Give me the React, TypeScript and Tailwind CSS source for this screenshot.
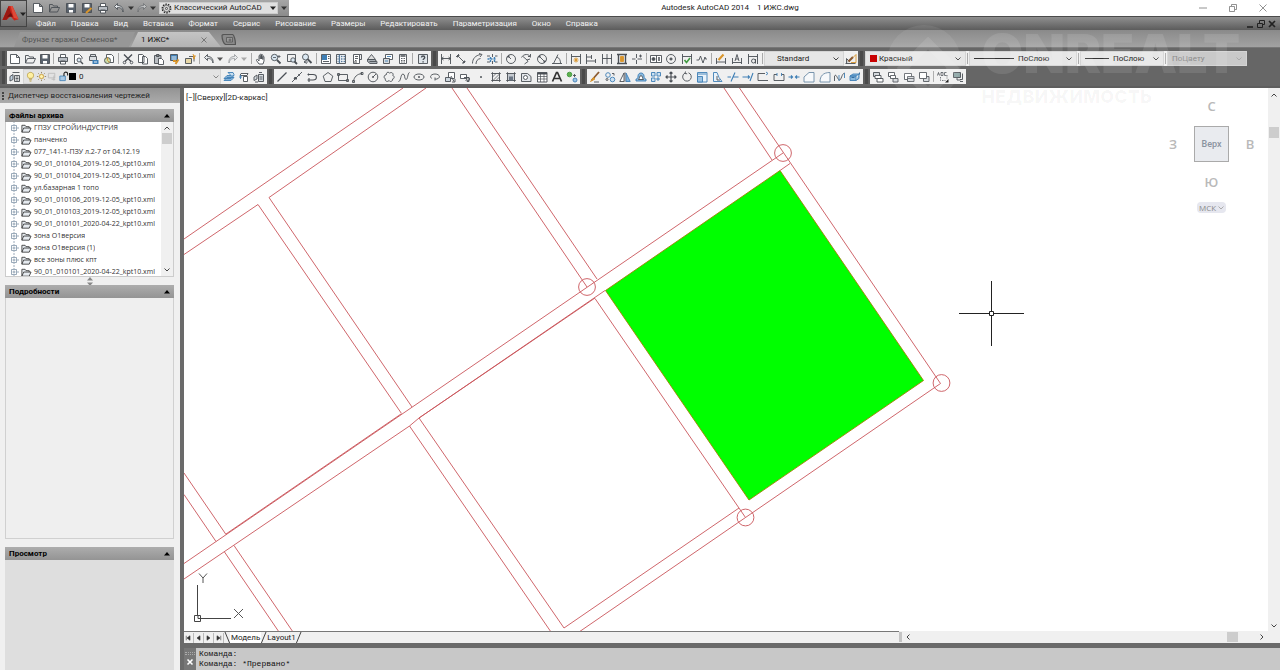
import { Fragment, useState, type ReactNode } from 'react';

const ink = '#4a4f55';
const blue = '#3f7fb5';
const amber = '#d9952b';
const green = '#3f9a3f';

// 12x12 glyphs, stroked with currentColor unless they say otherwise
const glyphs: Record<string, ReactNode> = {
  new: <path d="M1.5 1.5h6l3 3v6h-9zM7.5 1.5v3h3" fill="#fff" />,
  open: <path d="M1.5 10V2.500h3l1 1.500h4v1.500M1.500 10l2-4.500h8L9.500 10z" fill="none" />,
  save: <><path d="M1.5 1.500h9v9h-9z" fill="#59626d" /><path d="M3.500 2h5v3.500h-5zM4 8h4v2.500H4z" fill="#fff" stroke="none" /></>,
  saveAs: <><path d="M1.5 1.500h9v9h-9z" fill="#59626d" /><path d="M3.500 2h5v3.500h-5z" fill="#fff" stroke="none" /><path d="M5 11l5.500-5" stroke={amber} strokeWidth="2" /></>,
  print: <><path d="M3.500 4.500v-3h5v3M3.500 8v3h5V8" fill="#fff" /><path d="M1.500 4.500h9v4h-9z" fill="#b9bec4" /><path d="M3.500 8h5" /></>,
  preview: <><path d="M2.500 10.500v-9h5l2.500 2.500v2" fill="#fff" /><path d="M2.500 10.500h3" /><circle cx="7" cy="7" r="2" fill="#dbe8f2" /><path d="M8.500 8.500l2.500 2.500" strokeWidth="1.400" /></>,
  publish: <><path d="M2.500 3.500v-2h5v2M1.500 3.500h7v4h-7z" fill="#dadde0" /><path d="M4.500 7h6v4h-6z" fill={blue} stroke="none" /><path d="M6 9h3" stroke="#fff" /></>,
  dwf: <><path d="M3.500 1.500h5l2 2v6h-7z" fill="#fff" /><circle cx="4.500" cy="7.500" r="3" fill="#c8d9a5" /><path d="M4.500 7.500V4.500M4.500 7.500l2 2" stroke={amber} /></>,
  cut: <><path d="M2 1.500l7 7M10 1.500l-7 7" strokeWidth="1.400" /><circle cx="2.500" cy="9.500" r="1.300" /><circle cx="9.500" cy="9.500" r="1.300" /></>,
  copy: <path d="M1.500 1.500h4l1.500 1.500v6.500H1.500zM5.500 3.500h3l2 2v5.500h-5z" fill="#fff" />,
  paste: <><path d="M1.500 2.500h6.500v8H1.500z" fill="#b9bdc2" /><path d="M3.500 1.500h2.500v2H3.500z" fill="#888" /><path d="M5.500 5.500h3l2 2v4h-5z" fill="#fff" /></>,
  match: <><path d="M1.500 1.500h7v6h-7z" fill={blue} /><path d="M2.500 4h5M2.500 6h5" stroke="#fff" /><path d="M4 8h3M9.500 6.500L6.500 11" stroke={amber} strokeWidth="2" /></>,
  block: <><path d="M1.500 5.500h6v5h-6z" fill="#e8d8a8" /><path d="M5 3.500h5v5" /><path d="M9 1l.600 1.800L11.500 3l-1.500 1 .500 2L9 5" fill={amber} stroke={amber} /></>,
  undo: <path d="M4.500 1.500L1.500 4.500l3 3v-2c3 0 4.500.500 5.500 4.500.500-4-1.500-6.500-5.500-6.500z" fill="#e4e7ea" />,
  redo: <path d="M7.500 1.500l3 3-3 3v-2c-3 0-4.500.500-5.500 4.500-.500-4 1.500-6.500 5.500-6.500z" fill="#e4e7ea" opacity=".5" />,
  pan: <path d="M4 11L1.500 7.500c-.500-1 .700-1.500 1.300-.800L4 8V3c0-1 1.200-1 1.200 0v3V1.800c0-1 1.300-1 1.300 0V6 2.300c0-1 1.300-1 1.300 0V6.500 4c0-1 1.200-1 1.200 0v4L8 11z" fill="#fff" />,
  zoomRt: <><circle cx="4.500" cy="4.500" r="3.200" fill="#dbe8f2" /><path d="M7 7l3.500 3.500" strokeWidth="1.800" /><path d="M9 2v3M7.500 3.500h3M3 4.500h3" strokeWidth=".8" /></>,
  zoomWin: <><path d="M1.500 1.500h8v7h-8z" /><circle cx="7" cy="7" r="2.200" fill="#dbe8f2" /><path d="M8.500 8.500l2.500 2.500" strokeWidth="1.800" /></>,
  zoomPrev: <><circle cx="4.500" cy="4" r="3" fill="#dbe8f2" /><path d="M6.500 6l4 4" strokeWidth="1.800" /><path d="M6 10.500l-3-1.500 3-2M3 9h4" strokeWidth=".8" /></>,
  props: <><path d="M1.500 1.500h9v9h-9z" fill="#fff" /><path d="M2 2h5v5H2z" fill={blue} stroke="none" /><path d="M3 8.500h6M8 3.500h1.500M8 5.500h1.500" /></>,
  dcenter: <><path d="M1.500 1.500h9v9h-9z" fill="#fff" /><path d="M4.500 1.500v9M6 3.500h1.500M8.500 3.500H10M6 6h1.500M8.500 6H10M6 8.500h1.500M8.500 8.500H10M2.500 3.500h1M2.500 6h1M2.500 8.500h1" stroke="#56799a" strokeWidth="1.300" /></>,
  palettes: <><path d="M2.500 1.500h6v9h-6z" fill="#fff" /><path d="M8.500 1.500h2v5h-2M4 3.500h3M4 5.500h3M4 7.500h1.500" /><path d="M3 8h3v2H3z" fill="#aaa" stroke="none" /></>,
  sheets: <><path d="M1.500 6.500l4-5 4 5z" fill="#ddd" /><path d="M1.500 6.500h7l2.500 2v2h-7l-2.500-2z" fill="#aab0b6" /><path d="M3.500 8.500h7" /></>,
  markup: <><path d="M3.500 1.500h7v5h-7z" fill="#fff" /><path d="M1.500 5.500h6v5h-6z" fill="#d6dade" /><path d="M5 3.500h4M3 8h3" stroke={blue} /></>,
  calc: <><path d="M2.500 1.500h7v9h-7z" fill="#fff" /><path d="M3.500 3h5" strokeWidth="1.500" /><path d="M4 5.500h4M4 7.500h4M4 9h4" strokeDasharray="1 .5" /></>,
  help: <><path d="M1.500 1.500h9v9h-9z" fill="#dfe5ea" /><path d="M4.500 4.500c0-2 3.200-2 3.200 0 0 1.200-1.600 1.200-1.600 2.500M6.100 8.200v1.300" strokeWidth="1.400" /></>,
  dimLinear: <path d="M1.500 1v10M10.500 1v10M1.500 5.500h9M3.500 4l-2 1.500 2 1.500M8.500 4l2 1.500-2 1.500" />,
  dimAligned: <path d="M1 4l3-3M7.500 11l3-3M2.500 2.500l7 7M2.500 4.500v-2h2M9.500 7.500v2h-2" />,
  dimArc: <><path d="M1.500 10.500c0-5 3-8 8-9M5 11c0-3 1.500-5 4.500-5.500" /><path d="M8 .500l3 1-2 2.500" /></>,
  dimOrd: <><path d="M1 3h3M1 9h3M6.500 1v3M6.500 8v3M9 3h2.500M9 9h2.500" /><path d="M1.500 6h9M4.500 4v5M8.500 4v5" stroke={blue} strokeWidth="1.400" strokeDasharray="2 1" /></>,
  dimRadius: <><circle cx="6" cy="6" r="4.500" /><path d="M6 6L3 3M3 5V3h2" /></>,
  dimJog: <path d="M1.500 4.500c2-4 8-4 9 0M10 6l-3 1 1 1.500L4.500 11M3 3.500l4 3.500M8 3.500h2.500V1" />,
  dimDia: <><circle cx="6" cy="6" r="4.500" /><path d="M3 3l6 6M3 5V3h2M9 7v2H7" /></>,
  dimAng: <path d="M1 10.500h10M2.500 10.500L7 1.500M6 4c2.500 1 3.500 3.500 3.500 6" />,
  dimQuick: <><path d="M1.500 1v10M10.500 1v10M1.500 3.500h9" /><path d="M6 4.500v5M3.500 7h5M4.500 5l3 4M7.500 5l-3 4" stroke={amber} /></>,
  dimBase: <path d="M1.500 1v10M6.500 2v4M10.500 6v4M1.500 4h5M1.500 8h9" />,
  dimCont: <path d="M1.500 1v10M6 1v10M10.500 1v10M1.500 5.500h9" />,
  dimSpace: <><path d="M1 1.500h10M1 10.500h10M2.500 1.500v9M9.500 1.500v9" strokeWidth="1.400" /><path d="M4.500 3.500h3v5h-3z" fill={amber} stroke={amber} /></>,
  dimBreak: <path d="M5.500 1v4M5.500 7v4M1 6h3.500M6.500 6H11M8 3h3M9.500 1.500v3" />,
  tolerance: <><path d="M.500 2.500h11v7H.500zM6.500 2.500v7" fill="#fff" /><circle cx="3.500" cy="6" r="1.500" fill={ink} /><path d="M9 4v4" strokeWidth="1.500" /></>,
  centerMark: <><circle cx="6" cy="6" r="4.500" /><path d="M6 4.500v3M4.500 6h3" strokeWidth="1.300" /></>,
  inspect: <><path d="M1.500 1v10M10.500 1v10M1.500 3.500h9" /><path d="M3.500 7l2 2.500L9 5" stroke={green} strokeWidth="1.600" /></>,
  jogLine: <path d="M.500 7h2.500l1.500-4 2.500 7 2-6 .500 2H11" />,
  dimEdit: <><path d="M1.500 5v6M10.500 5v6M1.500 9h9" /><path d="M3.500 7L8.500 1.500" stroke={amber} strokeWidth="2" /></>,
  dimText: <path d="M1.500 5v6M10.500 5v6M1.500 9.500h9M4 8l2-6.500L8 8M4.500 6h3" />,
  dimUpdate: <><path d="M1.500 1v10M1.500 3.500h9M10.500 1v10" /><circle cx="6.500" cy="8" r="2" /><path d="M8.500 6v4.500" /></>,
  dimStyle: <><path d="M.500 10.500h10M1.500 10.500v-5l3 3" fill="#ccc" /><path d="M3.500 8.500L8 4" stroke="#8a5a30" strokeWidth="2.200" /><path d="M8 4.500L11 1.500v8H6" stroke={amber} /></>,
  layers: <><path d="M3.500 1.500h7M5.500 4.500h5v6h-5z" fill="#fff" /><path d="M6.500 6h3M6.500 7.500h3M6.500 9h3" /><path d="M1 5.500l3-2v5l-3 1.500z" fill="#c3d3e2" /></>,
  bulb: <path d="M4.200 8C1.500 5.500 2.500 1.500 6 1.500S10.500 5.500 7.800 8zM4.500 9.500h3M5 11h2" fill="#fff0a0" stroke="#b79a3c" />,
  sun: <><circle cx="6" cy="6" r="2.300" fill="#fff3b0" stroke="#c9982c" /><path d="M6 1v1.500M6 9.500V11M1 6h1.500M9.500 6H11M2.500 2.500l1 1M8.500 8.500l1 1M9.500 2.500l-1 1M3.500 8.500l-1 1" stroke="#8a7850" /></>,
  vpFreeze: <path d="M1.500 2.500h7v5h-7zM5 9h4M7.500 5v5.500" stroke="#b8b8b8" fill="#e2e2e2" />,
  lock: <><path d="M2 5.500h6v5H2z" fill="#a9c8e4" stroke={blue} /><path d="M6.500 5.500V3c0-2.300 4-2.300 4 0v2" strokeWidth="1.200" /></>,
  layerCur: <><path d="M1 7.500L4 4.500h7l-3 3zM1 9.500l3-3h7l-3 3z" fill="#86b4da" stroke={blue} /><path d="M5 1.500h5l1 2-2 2z" fill="#c8dff0" stroke={blue} /></>,
  layerPrev: <><path d="M5.500 5.500h4v5h-4zM3 2.500h7l-1 2H2z" fill="#fff" /><path d="M1 6h3M2.500 4v4" stroke={blue} /></>,
  layerState: <><path d="M5.500 3.500h5v7h-5zM1 6l3-2v4l-3 1.500z" fill="#d8dde1" /><path d="M6.500 6h3M6.500 8h3M2 11h3M6 1.500h3" /></>,
  line: <path d="M1.500 10.500l9-9" strokeWidth="1.200" />,
  xline: <><path d="M1 11L11 1" /><path d="M3 8l1-2 2 2zM7 4h2M8 5V3" fill={ink} /></>,
  pline: <path d="M1.500 3.500H7c4.500 0 4.500 5.500 0 5.500H1.500M3 7v4M2.500 2.500v2" strokeWidth="1.100" />,
  polygon: <path d="M6 1.500l4.800 3.600L9 10.500H3L1.200 5.100z" />,
  rect: <path d="M1.500 3.500h9v6h-9zM.500 2.500h2v2h-2zM9.500 8.500h2v2h-2z" />,
  arc: <path d="M1.500 10.500C2 6 5 3 10 2.500M.500 9.500h2v2h-2zM9 1.500h2v2H9z" />,
  circle: <><circle cx="6" cy="6" r="4.800" /><path d="M6 6l3-3M5.500 5.500h1v1h-1z" /></>,
  cloud: <path d="M3.500 3.500C3 1 6 .500 6.500 2.200c2-1.700 4.500.300 3.300 2.300 2 .500 1.700 3.500-.300 3.500.500 2.500-2.500 3.300-3.500 1.500-1.500 2-4.500.500-3.500-1.700C.500 7.500.500 4 3.500 3.500z" />,
  spline: <path d="M.500 10.500C3 10.500 2.500 3 5 3s1 5.500 3 5.500S9.500 2 11.500 1.500" />,
  ellipse: <><ellipse cx="6" cy="6" rx="5" ry="3" /><path d="M5 6h2M6 5v2" /></>,
  ellArc: <path d="M3 7.500C0 6 2 3 6 3s6 3 3 4.500c-1.500 1-3 .500-3 .500M6 6.500v3" />,
  insert: <><path d="M4.500 1.500h6v6h-6z" fill="#fff" /><path d="M1.500 6.500h5v4h-5z" fill="#cdd6de" /><path d="M7 5l3 5.500M8 11h3V8" /></>,
  makeBlock: <><path d="M1.500 3.500h6v4h-6z" fill="#fff" /><path d="M5 6.500h5v4H8L6.500 9" /><circle cx="9" cy="8" r="1.500" /></>,
  point: <circle cx="6" cy="6" r=".6" fill={ink} />,
  hatch: <path d="M2.500 2.500h7v7h-7zM1 2.500h10M1 9.500h10M2.500 1v10M9.500 1v10M2.500 6l3.500-3.500M3 9.500l6.500-6.500M6 9.500l3.500-3.500" strokeWidth=".7" />,
  gradient: <><path d="M2.500 2.500h7v7h-7zM1 2.500h10M1 9.500h10M2.500 1v10M9.500 1v10" fill="#c5cad0" strokeWidth=".7" /><path d="M4 5.500h4v4H4z" fill="#6b7684" stroke="none" /></>,
  region: <><path d="M1.500 2.500h6l3.500 3v5h-9.500z" fill="#e3e6ea" /><circle cx="5.500" cy="6.500" r="2" fill="#fff" /></>,
  table: <><path d="M1.500 1.500h9.500v9.500h-9.500z" fill="#fff" /><path d="M1.500 2.500h9.500" strokeWidth="2" /><path d="M1.500 5.500h9.500M1.500 8h9.500M4.500 3v8M8 3v8" strokeWidth=".7" /></>,
  mtext: <path d="M1.500 10.500L5.500 1.500h1L10.500 10.500M3.500 7.500h5" stroke="#333" strokeWidth="1.700" />,
  addSel: <><circle cx="3.500" cy="3.500" r="2.300" fill="#5faf4c" stroke={green} /><circle cx="9" cy="9" r="2" fill="#9cc3e4" stroke={blue} /><path d="M7 4.500h3M8.500 3v3" /></>,
  erase: <><path d="M2.500 9.500L10 1" stroke="#8b5a30" strokeWidth="1.800" /><path d="M1.500 10.500l3-4 1.500 1.500z" fill={amber} stroke={amber} /><path d="M5 11h5" /></>,
  copyObj: <><circle cx="4" cy="4" r="2.300" stroke={blue} /><circle cx="8.500" cy="8.500" r="2.300" fill="#cfe2f2" stroke={blue} /><circle cx="3" cy="8.500" r="1" /><path d="M8 2.500h2v2" /></>,
  mirror: <><path d="M5 2v8.500H.800z" fill="#fff" /><path d="M7 2v8.500h4.200z" fill="#7fb2dc" stroke={blue} /><path d="M6 1v10" strokeWidth=".6" /></>,
  offset: <><path d="M1 10V8c1.500 0 2-1 2-3 0-4 6-4 6 0 0 2 .500 3 2 3v2z" fill="#8ab9de" stroke={blue} /><path d="M3.500 8.500c1-.500 1-4 2.500-4s1.500 3.500 2.500 4z" fill="#fff" /></>,
  array: <path d="M1.500 1.500h3.500v3.500H1.500zM7 1.500h3.500v3.500H7zM1.500 7h3.500v3.500H1.500zM7 7h2v2H7z" fill="#cfe2f2" stroke={blue} />,
  move: <path d="M6 .800v10.400M.800 6h10.400M4.500 2.500L6 1l1.500 1.500M4.500 9.500L6 11l1.500-1.500M2.500 4.500L1 6l1.500 1.500M9.500 4.500L11 6 9.500 7.500" strokeWidth="1.200" />,
  rotate: <path d="M7.500 1.800a4.300 4.300 0 1 1-3.500.200M4.500.500L4 2.500l2.200.300" />,
  scale: <><path d="M1.500 1.500h9.500v9.500H1.500z" fill="#eaf3fa" stroke={blue} /><path d="M1.500 5.500h5v5.500h-5z" fill="#9dc4e3" stroke={blue} /><path d="M1.500 3h9" stroke={blue} /></>,
  stretch: <><path d="M2.500 10.500v-9h3.500l2 5 3 4z" fill="#eaf3fa" stroke={blue} /><path d="M6 5v4h3" /></>,
  trim: <path d="M.500 6h3.500M6.500 6h5M4 10.500L8 1.500" stroke={blue} strokeWidth="1.100" />,
  extend: <path d="M.500 6h6M8 10L11 2M6 4.500L7.500 6 6 7.500" stroke={blue} strokeWidth="1.100" />,
  breakPt: <><path d="M8 2.500H1v7h10" /><path d="M9 1l2 1.500L9 4" stroke={blue} /></>,
  breakObj: <><path d="M4 3.500H1v6h10v-6H8.500" /><path d="M4 2v3M8.500 2v3" stroke={blue} /></>,
  join: <path d="M.500 6h4M7.500 6h4M3 4.500L4.500 6 3 7.500M9 4.500L7.500 6 9 7.500" stroke={blue} strokeWidth="1.200" />,
  chamfer: <path d="M1 11V6l5-4.500h5V11z" fill="#f7f9fb" stroke="#6b8aa5" />,
  fillet: <path d="M1 11c0-6 3-9.500 10-9.500V11z" fill="#f7f9fb" stroke="#6b8aa5" />,
  blend: <><path d="M.500 10V5c2-3 3 4 5 4s2-6 5-7" /><path d="M5 4v6M10.500 2v5" stroke={blue} /></>,
  explode: <><path d="M1 5l3-2h6l-3 2zM1 5h6v4.500H1zM7 9.500l3-2V3" fill="#8ab9de" stroke={blue} /><path d="M2.500 6.500h3M10.500 1.500v2" stroke="#2c6496" /></>,
  front: <><path d="M1.500 1.500h6v4h-6z" fill="#d5d9dd" /><path d="M3 4.500h6v3H3zM5 7.500h6V11H5z" fill="#fff" /></>,
  back: <><path d="M1.500 1.500h6v4h-6z" fill="#fff" /><path d="M3.500 4.500h5v3h-5z" fill="#fff" /><path d="M6 7.500h5V11H6z" fill="#d5d9dd" /></>,
  above: <><path d="M1.500 2.500h7v6h-7z" fill="#fff" /><path d="M4.500 5.500h6.500v5H4.500z" fill="#d5d9dd" /><path d="M4.500 7.500H11" /></>,
  under: <><path d="M5.500 5.500h5.500v5H5.500z" fill="#d5d9dd" /><path d="M1.500 1.500h7v6h-7z" fill="#fff" /></>,
  textFront: <><path d="M.500 4.500l1-3 1 3M4 1.500v3h2v-3zM9.500 1.500h-2v3h2" strokeWidth=".9" /><path d="M3.500 6v3.500h5M10 4v3.500" strokeDasharray="1.500 1" /><path d="M11.500 8v3.500H8z" fill="#111" stroke="none" /></>,
  hatchBack: <><path d="M1.500 1.500h7v5h-7z" fill="#8fa6a6" /><path d="M5 6.500V9h3.500M10.500 2.500v6H8M8 10.500h3" /></>,
  gear: <><circle cx="6" cy="6" r="4.700" strokeDasharray="1.700 1.200" strokeWidth="1.300" /><circle cx="6" cy="6" r="3.500" strokeWidth=".6" /><circle cx="6" cy="6" r="1.200" strokeWidth=".8" /></>,
  folder: <path d="M1.500 10V2.500h3.500l1 1.500h3.500v1.500M1.500 10l2-4.500h8L9.500 10z" fill="#e6ebf0" />,
};

const names: Record<string, string> = {
  new: 'Создать', open: 'Открыть', save: 'Сохранить', print: 'Печать', undo: 'Отменить', redo: 'Повторить', cut: 'Вырезать',
  copy: 'Копировать', paste: 'Вставить', help: 'Справка', line: 'Отрезок', circle: 'Круг', arc: 'Дуга', move: 'Перенести',
};

function Glyph({ name, className = 'size-3' }: { name: string; className?: string }) {
  return (
    <svg viewBox="0 0 12 12" className={`${className} shrink-0`} fill="none" stroke="currentColor" strokeWidth=".9" aria-hidden="true">
      {glyphs[name]}
    </svg>
  );
}

function Tool({ name }: { name: string }) {
  return (
    <button type="button" aria-label={names[name] ?? name} className="flex flex-1 items-center justify-center text-[#4a4f55]">
      <Glyph name={name} />
    </button>
  );
}

function Group({ icons, className }: { icons: string; className: string }) {
  return (
    <div className={`flex shrink-0 ${className}`}>
      {icons.split(' ').map((name) => <Tool key={name} name={name} />)}
    </div>
  );
}

const Sep = () => <span className="mx-px my-0.5 w-px shrink-0 bg-[#a9a9a9]" />;

const Grip = () => <span className="w-[7px] shrink-0 border-x-2 border-[#5e5e5e] bg-[#4a4a4a]" />;

function Chevron({ className = '' }: { className?: string }) {
  return (
    <svg viewBox="0 0 6 6" className={`size-1.5 shrink-0 ${className}`} fill="none" stroke="currentColor" aria-hidden="true">
      <path d="M.5 1.500L3 4l2.500-2.500" />
    </svg>
  );
}

const Caret = ({ className = '' }: { className?: string }) => (
  <svg viewBox="0 0 6 4" className={`h-1 w-1.5 shrink-0 ${className}`} fill="currentColor" aria-hidden="true">
    <path d="M0 .5h6L3 4z" />
  </svg>
);

function Combo({ label, value, className, before, disabled = false, pad = '' }: {
  label: string; value: string; className: string; before?: ReactNode; disabled?: boolean; pad?: string;
}) {
  return (
    <div className={`flex shrink-0 items-center gap-1 border border-[#d4d4d4] px-1 ${disabled ? 'bg-[#c9c9c9] text-[#8b8b8b]' : 'bg-[#e6e6e6] text-[#222]'} ${className}`}>
      {before}
      <select aria-label={label} disabled={disabled} className={`min-w-0 flex-1 appearance-none bg-transparent outline-none ${pad}`}>
        <option>{value}</option>
      </select>
      <Chevron className={disabled ? 'text-[#aaa]' : 'text-[#444]'} />
    </div>
  );
}

const menus = ['Файл', 'Правка', 'Вид', 'Вставка', 'Формат', 'Сервис', 'Рисование', 'Размеры', 'Редактировать', 'Параметризация', 'Окно', 'Справка'];

function Header() {
  return (
    <header className="relative flex h-[30px] shrink-0 bg-gradient-to-b from-[#777] to-[#606060]">
      <button type="button" aria-label="Меню приложения" className="flex h-[27px] w-[27px] items-center justify-center gap-px border border-[#444] bg-gradient-to-b from-[#a0a0a0] to-[#6c6c6c] text-[#222]">
        <svg viewBox="0 0 18 18" className="size-[17px]" aria-hidden="true">
          <path d="M7 1h4l6.500 14-4.500 1.500-4-4.500-4 3.500L.500 16z" fill="#c9251b" />
          <path d="M7 1L.500 16l4.500-.500L9.500 8z" fill="#9a1812" />
          <path d="M9 1h2l6.500 14-5-1.500z" fill="#e04a38" />
          <path d="M5.500 12.500L9.500 8l2 4.500z" fill="#6b0f0c" />
        </svg>
        <Caret />
      </button>
      <div className="flex min-w-0 flex-1 flex-col">
        <div className="flex h-4 bg-white">
          <div className="flex w-[262px] shrink-0 items-center bg-gradient-to-b from-[#a6a6a6] to-[#8b8b8b] pl-[3px] text-[#333]">
            <Group icons="new open save saveAs print" className="w-[81px]" />
            <Group icons="undo" className="w-4" />
            <Caret className="mx-px" />
            <Group icons="redo" className="w-3.5" />
            <Caret className="mx-px" />
            <label className="ml-0.5 flex h-3 w-[119px] items-center gap-0.5 border border-[#ccc] bg-[#e0e0e0] px-px text-[#222]">
              <Glyph name="gear" className="size-[11px]" />
              <select aria-label="Рабочее пространство" className="min-w-0 flex-1 appearance-none bg-transparent outline-none">
                <option>Классический AutoCAD</option>
              </select>
              <Caret />
            </label>
            <button type="button" aria-label="Настройка панели" className="flex flex-1 justify-center"><Caret /></button>
          </div>
          <h1 className="flex-1 pl-[67px] text-center leading-4 whitespace-pre text-[#222]">Autodesk AutoCAD 2014    1 ИЖС.dwg</h1>
          <div className="flex w-[176px] items-center justify-end gap-5 pr-3 text-[#777]">
            {['M1 5h8', 'M1.500 3.500h5v5h-5zM3.500 3V1.500h5v5H7', 'M1.500 1.500l7 7M8.500 1.500l-7 7'].map((d, i) => (
              <button key={d} type="button" aria-label={['Свернуть', 'Развернуть', 'Закрыть'][i]}>
                <svg viewBox="0 0 10 10" className="size-2.5" fill="none" stroke="currentColor" strokeWidth=".8"><path d={d} /></svg>
              </button>
            ))}
          </div>
        </div>
        <nav className="flex h-3.5 items-center border-t border-[#4b4b4b] bg-gradient-to-b from-[#909090] to-[#5c5c5c] pl-[9px] text-[#f2f2f2]">
          <div className="flex flex-1 gap-[15px]">
            {menus.map((item) => <button key={item} type="button" className="leading-3">{item}</button>)}
          </div>
          <div className="flex items-center gap-px pr-[3px] text-[#222]">
            {['M2 8h6', 'M1.500 4.500h5v4h-5zM3.500 4V1.500h5v4H7', 'M2 2l6 6M8 2L2 8'].map((d, i) => (
              <button key={d} type="button" aria-label={['Свернуть чертеж', 'Восстановить чертеж', 'Закрыть чертеж'][i]}>
                <svg viewBox="0 0 10 10" className="size-2.5" fill="none" stroke="currentColor" strokeWidth={i === 1 ? 1 : 1.6}><path d={d} /></svg>
              </button>
            ))}
          </div>
        </nav>
      </div>
    </header>
  );
}

function FileTabs() {
  return (
    <div className="flex h-[18px] shrink-0 items-end border-b border-[#777] bg-gradient-to-b from-[#8a8a8a] to-[#a2a2a2] pl-3.5">
      <button type="button" className="h-[15px] w-[121px] bg-[#979797] pl-2 text-left text-[#555] [clip-path:polygon(6px_0,100%_0,95%_100%,0_100%)]">Фрунзе гаражи Семенов*</button>
      <div className="-ml-1 flex h-[15px] w-[90px] items-center justify-between bg-gradient-to-b from-[#c4c4c4] to-[#b3b3b3] pr-3.5 pl-2.5 text-[#111] [clip-path:polygon(7px_0,78px_0,100%_100%,0_100%)]">
        <button type="button">1 ИЖС*</button>
        <button type="button" aria-label="Закрыть вкладку" className="text-[#777]">
          <svg viewBox="0 0 6 6" className="size-1.5" stroke="currentColor"><path d="M.5.500l5 5M5.500.500l-5 5" /></svg>
        </button>
      </div>
      <button type="button" aria-label="Новая вкладка" className="mb-0.5 text-[#555]">
        <svg viewBox="0 0 15 11" className="h-[11px] w-[15px]" stroke="currentColor" strokeWidth="1.200" fill="#8a8a8a">
          <path d="M1 1.500C1 1 2 .500 3 .500h8.500c1.500 0 3 6 3 10H5C2.500 10.500 1 5 1 1.500z" />
          <path d="M5.500 3.500h6v4.500h-6zM9 4.500v3M7.500 6h3" fill="#999" strokeWidth=".8" />
        </svg>
      </button>
    </div>
  );
}

const bar = 'flex bg-[#f0f0f0]';

function Toolbars() {
  return (
    <div className="flex shrink-0 flex-col gap-px border-b-2 border-[#5e5e5e] bg-[#666] pt-0.5 pb-px">
      <div className="flex h-[17px] border-y border-[#666]">
        <Grip />
        <div className={bar}>
          <Group icons="new open save" className="w-[45px]" />
          <Sep />
          <Group icons="print preview publish dwf" className="w-[62px]" />
          <Sep />
          <Group icons="cut copy paste match block" className="w-[78px]" />
          <Sep />
          <Group icons="undo" className="w-4" />
          <Caret className="mr-0.5 self-center text-[#555]" />
          <Group icons="redo" className="w-4" />
          <Caret className="mr-[3px] self-center text-[#aaa]" />
          <Sep />
          <Group icons="pan zoomRt zoomWin zoomPrev" className="w-[62px]" />
          <Sep />
          <Group icons="props dcenter palettes sheets markup calc" className="w-[93px]" />
          <Sep />
          <Group icons="help" className="w-[17px]" />
        </div>
        <Grip />
        <div className={bar}>
          <Group icons="dimLinear dimAligned dimArc dimOrd" className="w-[62px]" />
          <Sep />
          <Group icons="dimRadius dimJog dimDia dimAng" className="w-[62px]" />
          <Sep />
          <Group icons="dimQuick dimBase dimCont dimSpace dimBreak" className="w-[77px]" />
          <Sep />
          <Group icons="tolerance centerMark inspect jogLine" className="w-[62px]" />
          <Sep />
          <Group icons="dimEdit dimText dimUpdate" className="w-[48px]" />
          <Sep />
          <Combo label="Размерный стиль" value="Standard" className="w-20" pad="pl-2" />
          <Group icons="dimStyle" className="w-3.5" />
        </div>
        <Grip />
        <div className={bar}>
          <Combo label="Цвет" value="Красный" className="w-[101px]" before={<span className="-mr-0.5 size-[7px] bg-[#c80000]" />} />
          <Sep />
          <Combo label="Тип линий" value="ПоСлою" className="w-[108px]" before={<span className="h-px w-10 bg-[#333]" />} />
          <Sep />
          <Combo label="Вес линий" value="ПоСлою" className="w-[84px]" before={<span className="h-px w-6 bg-[#333]" />} />
          <Sep />
          <Combo label="Стиль печати" value="ПоЦвету" className="w-20" disabled />
        </div>
      </div>
      <div className="flex h-[17px] border-y border-[#666]">
        <Grip />
        <div className={bar}>
          <Group icons="layers" className="w-4" />
          <div className="flex w-[198px] items-center border border-[#d4d4d4] bg-[#e3e3e3] px-px text-[#222]">
            <Glyph name="bulb" className="size-[11px]" />
            <Glyph name="sun" className="size-[11px]" />
            <Glyph name="vpFreeze" className="size-[11px]" />
            <Glyph name="lock" className="size-[11px]" />
            <span className="size-[7px] bg-black" />
            <select aria-label="Слой" className="min-w-0 flex-1 appearance-none bg-transparent pl-[3px] outline-none">
              <option>0</option>
            </select>
            <Chevron className="text-[#888]" />
          </div>
          <Group icons="layerCur layerPrev layerState" className="w-[46px]" />
        </div>
        <Grip />
        <div className={bar}>
          <Group icons="line xline pline polygon rect arc circle cloud spline ellipse ellArc insert makeBlock point hatch gradient region table mtext addSel" className="w-[306px]" />
        </div>
        <Grip />
        <div className={bar}>
          <Group icons="erase copyObj mirror offset array move rotate scale stretch trim extend breakPt breakObj join chamfer fillet blend explode" className="w-[276px]" />
        </div>
        <Grip />
        <div className={bar}>
          <Group icons="front back above under" className="w-[62px]" />
          <Sep />
          <Group icons="textFront hatchBack" className="w-[31px]" />
        </div>
      </div>
    </div>
  );
}

const archive = [
  'ГПЗУ СТРОЙИНДУСТРИЯ',
  'панченко',
  '077_141-1-ПЗУ л.2-7 от 04.12.19',
  '90_01_010104_2019-12-05_kpt10.xml',
  '90_01_010104_2019-12-05_kpt10.xml',
  'ул.базарная 1 топо',
  '90_01_010106_2019-12-05_kpt10.xml',
  '90_01_010103_2019-12-05_kpt10.xml',
  '90_01_010101_2020-04-22_kpt10.xml',
  'зона О1версия',
  'зона О1версия (1)',
  'все зоны плюс кпт',
  '90_01_010101_2020-04-22_kpt10.xml',
];

function PanelTitle({ children }: { children: string }) {
  return (
    <h3 className="flex h-[13px] shrink-0 items-center justify-between bg-gradient-to-b from-[#adadad] to-[#949494] px-1 font-bold text-black">
      {children}
      <Caret className="rotate-180" />
    </h3>
  );
}

function RecoveryManager() {
  const [selected, setSelected] = useState(-1);

  return (
    <aside className="flex w-[184px] shrink-0 flex-col border-r-4 border-[#6a6a6a] bg-[#f0f0f0]">
      <h2 className="flex h-[15px] shrink-0 items-center bg-gradient-to-b from-[#949494] to-[#ababab] text-[#222]">
        <span className="mr-1 ml-0.5 h-2 border-l-2 border-dotted border-[#444]" />
        Диспетчер восстановления чертежей
      </h2>
      <div className="flex min-h-0 flex-1 flex-col pt-1.5 pr-1.5 pl-[5px]">
        <PanelTitle>Файлы архива</PanelTitle>
        <div className="flex h-[155px] shrink-0 border border-t-0 border-[#ccc] bg-white">
          <ul className="min-w-0 flex-1 overflow-hidden pl-1 font-['Open_Sans','Noto_Sans',sans-serif] text-[7px] text-[#333]">
            {archive.map((file, i) => (
              <li key={i} className="flex h-3 items-center">
                <button type="button" aria-label={`Развернуть ${file}`} className="flex h-3 w-[9px] items-center text-[#8296a8]">
                  <svg viewBox="0 0 9 12" className="h-3 w-[9px]" fill="none" stroke="currentColor" strokeWidth=".8">
                    <path d="M1.500 3.500h5v5h-5zM2.500 6h3M4 4.500v3M7 6h2" />
                    <path d="M4 0v3M4 9v3" strokeDasharray="1 1" />
                  </svg>
                </button>
                <Glyph name="folder" className="mx-px h-[11px] w-3" />
                <button type="button" onClick={() => setSelected(i)} className={`truncate pl-px leading-3 ${selected === i ? 'bg-[#cce4f7]' : ''}`}>{file}</button>
              </li>
            ))}
          </ul>
          <div className="flex w-3 flex-col items-center bg-[#f0f0f0] py-[3px] text-[#444]">
            <Chevron className="rotate-180" />
            <span className="mt-0.5 h-[11px] w-2.5 bg-[#cdcdcd]" />
            <Chevron className="mt-auto" />
          </div>
        </div>
        <div className="flex h-2 shrink-0 flex-col items-center justify-center gap-px text-[#888]">
          <Caret className="h-0.5 rotate-180" />
          <Caret className="h-0.5" />
        </div>
        <PanelTitle>Подробности</PanelTitle>
        <div className="h-[241px] shrink-0 border border-t-0 border-[#d0d0d0] bg-[#efefef]" />
        <div className="h-2 shrink-0" />
        <PanelTitle>Просмотр</PanelTitle>
        <div className="min-h-0 flex-1 bg-[#dedede]" />
      </div>
    </aside>
  );
}

const roads = [
  'M184 239L403 88', 'M184 254.500L258 204.500L401.500 413.500', 'M426 88L269 197.500L412 407',
  'M452 88L587 287', 'M467 88L597 279', 'M184 563.500L783 153', 'M184 579L409.500 426M419 418L605 290.500',
  'M780 170.500L790 163.500', 'M724 88L772 160', 'M739.500 88L940.500 383.500L745.500 517.500L579 632',
  'M595 298.500L745.500 517.500', 'M739 508L564 628L419 418', 'M409.500 426L551 632',
  'M409.500 426L419 418', 'M184 473L226 534.500', 'M184 494.500L216 541.500', 'M224.500 552L279 632', 'M234 545.500L293 632',
  'M226 534L401 414', 'M419 418L595 298',
];

const corners = [[783, 153], [587, 287], [941.5, 383], [745.5, 517.5]];

function Drawing() {
  return (
    <svg className="absolute inset-0 size-full" fill="none" aria-hidden="true">
      <g transform="translate(-184 -88)">
        <g stroke="#c9555a" strokeWidth=".9">
          <path d="M780 170.500L923.500 380.500L749 500L605.500 290.500z" fill="#00ff00" stroke="#a08000" />
          {roads.map((d) => <path key={d} d={d} />)}
          {corners.map(([x, y]) => <circle key={x} cx={x} cy={y} r="8.400" />)}
        </g>
        <path d="M959 313.500h30M994 313.500h30M991.500 281v30M991.500 316v30M989.500 311.500h4v4h-4z" stroke="#222" />
        <path d="M197.500 585v30M200 618.500h31M194.500 615.500h6v6h-6zM198 615v3.500h3" stroke="#444" />
        <path d="M199 573.500l4 4.500v5M207 573.500l-4 4.500M234 609l9 9M243 609l-9 9" stroke="#555" />
      </g>
    </svg>
  );
}

function ViewCube() {
  return (
    <div className="absolute top-3 right-[13px] flex flex-col items-center font-['Open_Sans',sans-serif] text-[13px] leading-3 font-semibold text-[#b9b9b9]">
      <button type="button">С</button>
      <div className="my-3.5 flex items-center gap-4">
        <button type="button" className="w-2.5">З</button>
        <button type="button" className="flex h-9 w-[35px] items-center justify-center border border-[#aaa] bg-[#e9ebef] font-['Roboto',sans-serif] text-[9px] font-medium text-[#8a93a0]">Верх</button>
        <button type="button" className="w-2.5">В</button>
      </div>
      <button type="button">Ю</button>
      <button type="button" className="mt-3.5 flex h-[11px] items-center gap-0.5 rounded-sm bg-[#e6e7ef] px-0.5 text-[8px] font-normal text-[#888]">
        МСК <Chevron className="text-[#aaa]" />
      </button>
    </div>
  );
}

function Viewport() {
  return (
    <section className="flex min-h-0 flex-1 flex-col">
      <div className="flex min-h-0 flex-1">
        <div className="relative min-w-0 flex-1 cursor-crosshair overflow-hidden bg-white">
          <Drawing />
          <p className="relative pt-1 pl-0.5 leading-3 text-[#222]">[−][Сверху][2D-каркас]</p>
          <ViewCube />
        </div>
        <div className="flex w-3 shrink-0 flex-col items-center bg-[#f0f0f0] pt-1 pb-0.5 text-[#444]">
          <Chevron className="rotate-180" />
          <span className="mt-[29px] h-[11px] w-2.5 bg-[#cdcdcd]" />
          <Chevron className="mt-auto" />
        </div>
      </div>
      <div className="flex h-3 shrink-0 items-center bg-[#f0f0f0] text-[#222]">
        <div className="flex h-full flex-1 items-center border-t border-[#777]">
          {['M3 3v6M8 3v6L4 6z', 'M8 3v6L4 6z', 'M4 3v6l4-3z', 'M4 3v6l4-3zM9 3v6'].map((d, i) => (
            <button key={d} type="button" aria-label={['Первый лист', 'Предыдущий', 'Следующий', 'Последний лист'][i]} className="border-r border-[#bbb]">
              <svg viewBox="0 0 12 12" className="h-2.5 w-[9px]" fill="#333" stroke="#333" strokeWidth=".8"><path d={d} /></svg>
            </button>
          ))}
          {['Модель', 'Layout1'].map((tab) => (
            <Fragment key={tab}>
              <svg viewBox="0 0 6 12" className="h-3 w-1.5 shrink-0" stroke="#444"><path d={tab === 'Модель' ? 'M1 0l5 12' : 'M5 0L0 12'} /></svg>
              <button type="button" className={tab === 'Модель' ? 'bg-white px-px' : ''}>{tab}</button>
            </Fragment>
          ))}
          <svg viewBox="0 0 6 12" className="h-3 w-1.5 shrink-0" stroke="#444"><path d="M5 0L0 12" /></svg>
        </div>
        <span className="h-2.5 w-[3px] bg-[#c4c4c4]" />
        <div className="mr-3 flex w-[366px] items-center px-[3px] text-[#444]">
          <Chevron className="rotate-90" />
          <span className="mr-[21px] ml-auto h-2.5 w-[11px] bg-[#cdcdcd]" />
          <Chevron className="-rotate-90" />
        </div>
      </div>
      <div className="flex h-[27px] shrink-0 border-t-[5px] border-[#6a6a6a] bg-[#c8c8c8]">
        <button type="button" aria-label="Закрыть командную строку" className="flex w-3 flex-col items-center justify-between bg-[#777] pt-1 pb-1 text-white">
          <span className="h-[3px] w-2.5 border-y border-dotted border-[#aaa]" />
          <svg viewBox="0 0 8 8" className="size-2" stroke="currentColor" strokeWidth="1.600"><path d="M1.500 1.500l5 5M6.500 1.500l-5 5" /></svg>
        </button>
        <pre className="pt-px pl-[3px] font-['Liberation_Mono',monospace] text-[8px] leading-2.5 text-[#111]">{'Команда:\nКоманда: *Прервано*'}</pre>
      </div>
    </section>
  );
}

function Watermark() {
  return (
    <div aria-hidden="true" className="pointer-events-none absolute top-6 right-10 flex items-start gap-5 text-white/10">
      <svg viewBox="0 0 76 86" className="h-[86px] w-[76px]">
        <circle cx="38" cy="38" r="37" fill="#fff" fillOpacity=".08" />
        <path d="M42 19l25 25-25 25-25-25z" fill="none" stroke="#fff" strokeOpacity=".1" strokeWidth="9" />
      </svg>
      <div className="font-['Inter',sans-serif] font-black">
        <p className="text-[54px] leading-[60px]">ONREALT</p>
        <p className="text-lg leading-[26px] text-black/3">НЕДВИЖИМОСТЬ</p>
      </div>
    </div>
  );
}

export default function App() {
  return (
    <div className="relative flex h-screen flex-col overflow-hidden bg-[#666] font-['Roboto','Noto_Sans',sans-serif] text-[8px] leading-3">
      <Header />
      <FileTabs />
      <Toolbars />
      <main className="flex min-h-0 flex-1">
        <RecoveryManager />
        <div className="flex min-w-0 flex-1 flex-col">
          <Viewport />
        </div>
      </main>
      <Watermark />
    </div>
  );
}
